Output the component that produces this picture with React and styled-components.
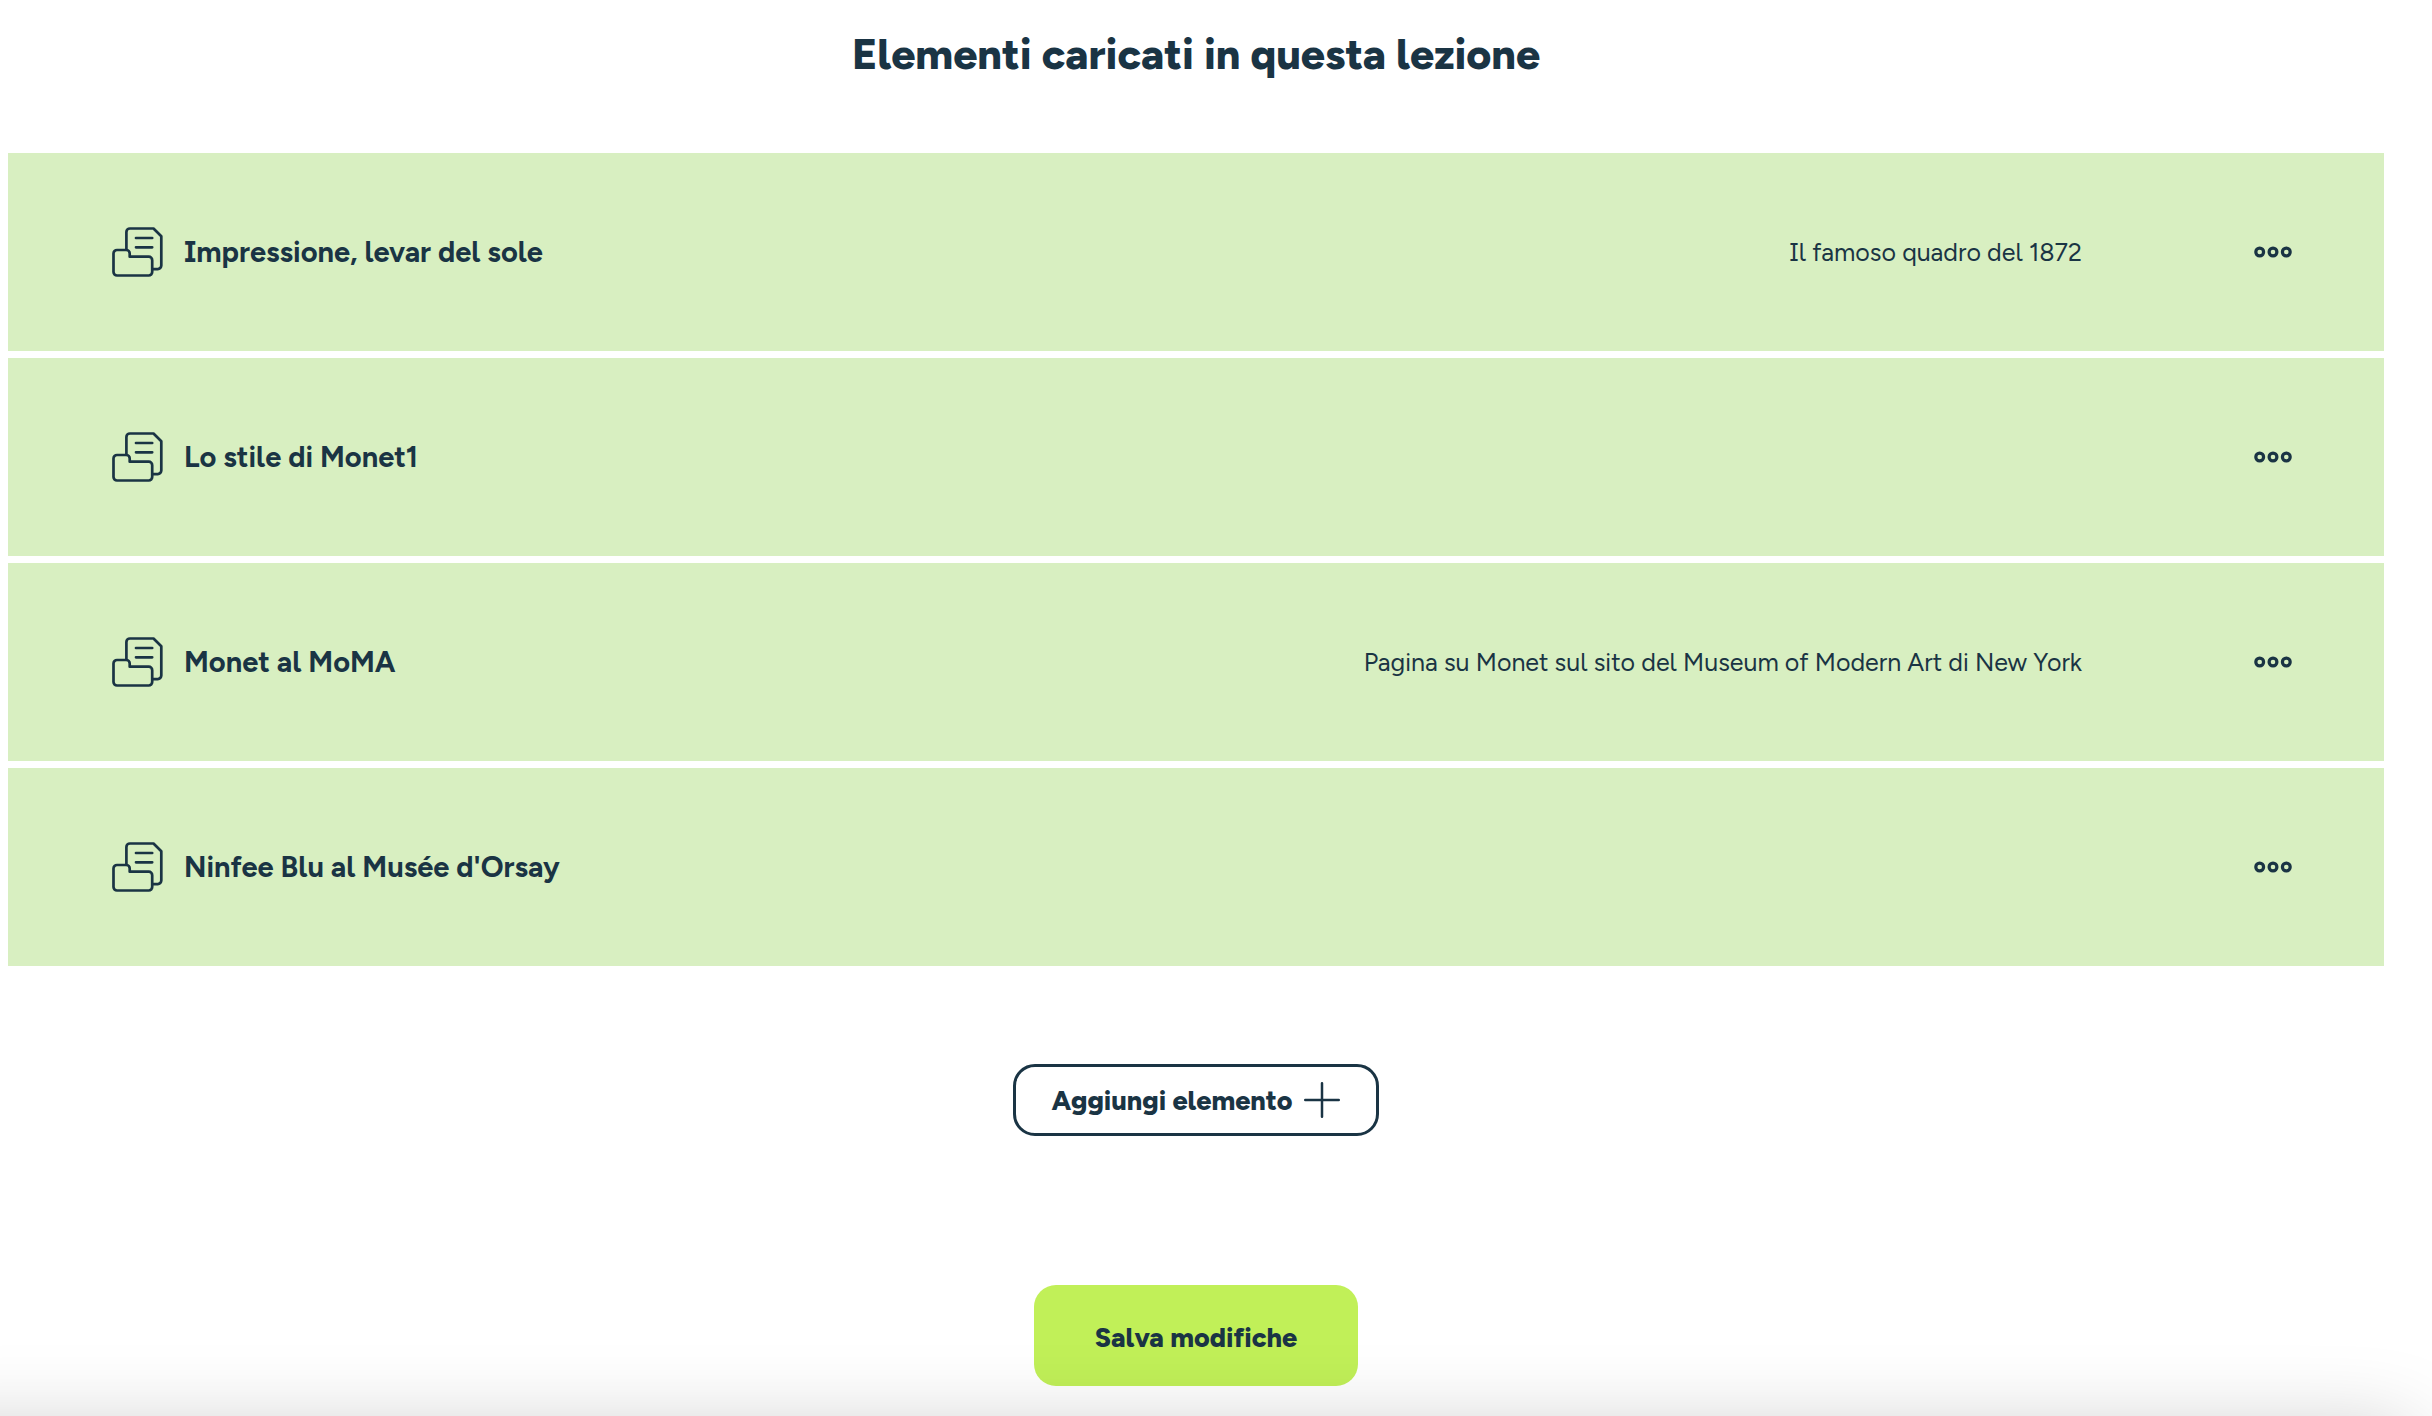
import React from 'react';
import styled, { createGlobalStyle } from 'styled-components';

const GlobalStyle = createGlobalStyle`
  * {
    box-sizing: border-box;
  }
  body {
    margin: 0;
    background: #ffffff;
    color: #1a3444;
    font-family: Figtree, Lato, 'Open Sans', sans-serif;
    font-feature-settings: 'ss02';
  }
`;

const lessonItems = [
  { id: 1, title: 'Impressione, levar del sole', description: 'Il famoso quadro del 1872' },
  { id: 2, title: 'Lo stile di Monet1', description: '' },
  {
    id: 3,
    title: 'Monet al MoMA',
    description: 'Pagina su Monet sul sito del Museum of Modern Art di New York',
  },
  { id: 4, title: "Ninfee Blu al Musée d'Orsay", description: '' },
];

function DocumentsIcon() {
  return (
    <svg width="51" height="50" viewBox="0 0 51 50" fill="none" stroke="currentColor" strokeWidth="2.7" strokeLinecap="round" strokeLinejoin="round" aria-hidden="true">
      <path d="M14.400 22.500V5a3.500 3.500 0 0 1 3.500-3.500H41.500L49.300 9.300V38.600a3.500 3.500 0 0 1-3.500 3.500H40.500" />
      <path d="M5 23H14.200a3.500 3.500 0 0 1 3.500 3.500V29.700H36.700a3.500 3.500 0 0 1 3.500 3.500V45a3.500 3.500 0 0 1-3.500 3.500H5A3.500 3.500 0 0 1 1.500 45V26.500A3.500 3.500 0 0 1 5 23Z" />
      <path d="M24 11H40.200M24 20.300H40.200" />
    </svg>
  );
}

function DotsIcon() {
  return (
    <svg width="38" height="12" viewBox="0 0 38 12" fill="none" stroke="currentColor" strokeWidth="3.2" aria-hidden="true">
      <circle cx="5.700" cy="6" r="3.900" />
      <circle cx="19" cy="6" r="3.900" />
      <circle cx="32.300" cy="6" r="3.900" />
    </svg>
  );
}

function PlusIcon() {
  return (
    <svg width="36" height="36" viewBox="0 0 36 36" fill="none" stroke="currentColor" strokeWidth="2.500" strokeLinecap="round" aria-hidden="true">
      <path d="M18 1.250V34.750M1.250 18H34.750" />
    </svg>
  );
}

function App() {
  return (
    <Page>
      <GlobalStyle />
      <Title>Elementi caricati in questa lezione</Title>
      <ItemList>
        {lessonItems.map((item) => (
          <Item key={item.id}>
            <DocumentsIcon />
            <ItemTitle>{item.title}</ItemTitle>
            <ItemDescription>{item.description}</ItemDescription>
            <MenuButton type="button" aria-label={`Opzioni per ${item.title}`}>
              <DotsIcon />
            </MenuButton>
          </Item>
        ))}
      </ItemList>
      <AddButton type="button">
        Aggiungi elemento
        <PlusIcon />
      </AddButton>
      <SaveButton type="button">Salva modifiche</SaveButton>
      <BottomShade />
    </Page>
  );
}

const Page = styled.main`
  display: flex;
  flex-direction: column;
  align-items: center;
  padding: 24px 48px 30px 8px;
`;
const Title = styled.h1`
  margin: 0;
  font-size: 43px;
  font-weight: 800;
  line-height: 60px;
`;
const ItemList = styled.ul`
  display: flex;
  flex-direction: column;
  align-self: stretch;
  gap: 7px;
  margin: 69px 0 98px;
  padding: 0;
  list-style: none;
`;
const Item = styled.li`
  display: flex;
  align-items: center;
  height: 198px;
  padding: 0 80px 0 104px;
  background: #d8efc1;
`;
const ItemTitle = styled.h2`
  margin: 0 0 0 21px;
  font-size: 29px;
  font-weight: 700;
  line-height: 40px;
`;
const ItemDescription = styled.p`
  flex: 1;
  margin: 0 160px 0 40px;
  font-size: 25px;
  line-height: 40px;
  text-align: right;
`;
const MenuButton = styled.button`
  display: flex;
  align-items: center;
  justify-content: center;
  padding: 12px;
  border: 0;
  background: transparent;
  color: inherit;
  cursor: pointer;
`;
const AddButton = styled.button`
  display: flex;
  align-items: center;
  gap: 12px;
  height: 72px;
  padding: 0 36px;
  border: 3px solid #1a3444;
  border-radius: 22px;
  background: #ffffff;
  color: inherit;
  font: inherit;
  font-size: 27px;
  font-weight: 800;
  cursor: pointer;
`;
const SaveButton = styled.button`
  height: 101px;
  margin-top: 149px;
  padding: 4px 61px 0;
  border: 0;
  border-radius: 22px;
  background: #c1f058;
  color: inherit;
  font: inherit;
  font-size: 27px;
  font-weight: 800;
  cursor: pointer;
`;
/* sits just under the window edge, only its shadow reaches the page */
const BottomShade = styled.div`
  position: fixed;
  right: 20px;
  bottom: -215px;
  left: -100px;
  height: 200px;
  box-shadow: 0 0 85px rgba(0, 0, 0, 0.22);
  pointer-events: none;
`;

export default App;
